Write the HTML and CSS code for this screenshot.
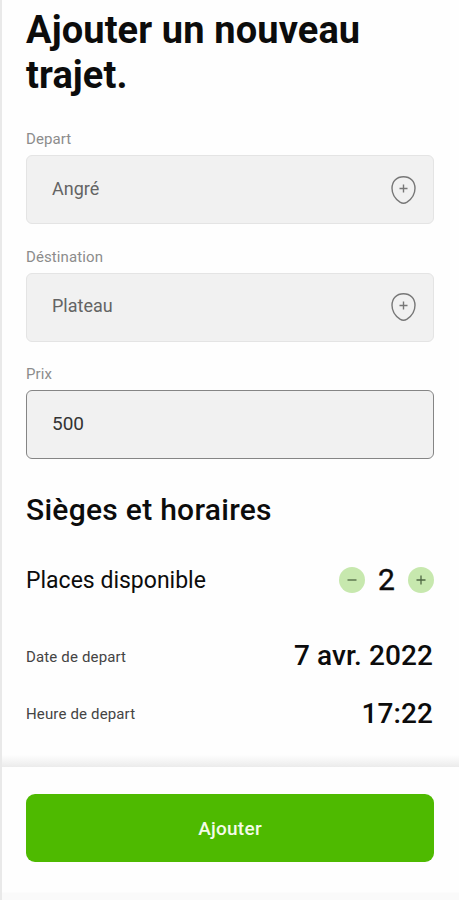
FILE: index.html
```html
<!DOCTYPE html>
<html lang="fr">
<head>
<meta charset="utf-8">
<title>Ajouter un nouveau trajet</title>
<link rel="stylesheet" href="styles.css">
</head>
<body>
<main class="content">
  <h1 class="title">Ajouter un nouveau<br>trajet.</h1>
  <div class="group">
    <div class="label">Depart</div>
    <div class="field"><span>Angré</span>
      <svg class="pin" viewBox="0 0 27 30"><path d="M13.500 1.700C6.500 1.700 2 6.500 2 13.300C2 19.500 6 24.500 10 27.200Q13.500 29.400 17 27.200C21 24.500 25 19.500 25 13.300C25 6.500 20.500 1.700 13.500 1.700Z"/><path d="M13.500 9.500v8M9.500 13.500h8"/></svg>
    </div>
  </div>
  <div class="group">
    <div class="label">Déstination</div>
    <div class="field"><span>Plateau</span>
      <svg class="pin" viewBox="0 0 27 30"><path d="M13.500 1.700C6.500 1.700 2 6.500 2 13.300C2 19.500 6 24.500 10 27.200Q13.500 29.400 17 27.200C21 24.500 25 19.500 25 13.300C25 6.500 20.500 1.700 13.500 1.700Z"/><path d="M13.500 9.500v8M9.500 13.500h8"/></svg>
    </div>
  </div>
  <div class="group">
    <div class="label">Prix</div>
    <div class="field active"><span>500</span></div>
  </div>
  <h2 class="subtitle">Sièges et horaires</h2>
  <div class="seats">
    <span class="seats-label">Places disponible</span>
    <div class="stepper">
      <svg class="step" viewBox="0 0 26 26"><circle cx="13" cy="13" r="13"/><path d="M8.500 13h9"/></svg>
      <span class="count">2</span>
      <svg class="step" viewBox="0 0 26 26"><circle cx="13" cy="13" r="13"/><path d="M8.500 13h9M13 8.500v9"/></svg>
    </div>
  </div>
  <div class="row"><span>Date de depart</span><strong>7 avr. 2022</strong></div>
  <div class="row"><span>Heure de depart</span><strong>17:22</strong></div>
</main>
<footer class="footer"><button class="submit">Ajouter</button></footer>
</body>
</html>
```
FILE: styles.css
```css
* { box-sizing: border-box; }
body {
  margin: 0;
  height: 900px;
  display: flex;
  flex-direction: column;
  overflow: hidden;
  background: #fefefe;
  border-left: 2px solid #e9e9e9;
  font-family: Roboto, "Liberation Sans", sans-serif;
  color: #0c0c0c;
}
.content {
  height: 767px;
  padding: 8px 25px 0 24px;
  background: linear-gradient(to top, #ebebeb, #fefefe 12px);
}
.title { margin: 0; height: 120px; font-size: 38px; line-height: 45px; font-weight: 700; letter-spacing: 0.120px; white-space: nowrap; }
.group { height: 117.600px; }
.label { height: 27px; font-size: 15px; line-height: 22px; letter-spacing: 0.100px; color: #8c8c8c; }
.field {
  height: 69px;
  padding: 0 16px 3px 25px;
  display: flex;
  align-items: center;
  justify-content: space-between;
  border: 1px solid #e4e4e4;
  border-radius: 6px;
  background: #f1f1f1;
  font-size: 18px;
  color: #646464;
}
.field.active { border-color: #858585; font-size: 19px; color: #333; }
.pin { width: 27px; height: 30px; margin-top: 3px; fill: none; stroke: #777; stroke-width: 1.400; }
.subtitle { margin: 0; height: 69px; padding-top: 11px; font-size: 30px; line-height: 36px; font-weight: 500; letter-spacing: 0.280px; }
.seats { height: 60px; display: flex; align-items: center; justify-content: space-between; }
.seats-label { padding-top: 2px; font-size: 23px; }
.stepper { display: flex; align-items: center; gap: 13px; }
.step { width: 26px; height: 26px; fill: #c7e8ae; stroke: none; }
.step path { stroke: #4e6642; stroke-width: 1.300; }
.count { width: 17px; font-size: 30px; line-height: 36px; font-weight: 400; -webkit-text-stroke: 0.400px; }
.row { height: 57.500px; display: flex; align-items: center; justify-content: space-between; font-size: 15px; letter-spacing: 0.150px; color: #444; }
.row span { padding-top: 2px; }
.seats + .row { margin-top: 17px; }
.row strong { margin-right: 1px; font-size: 28px; font-weight: 500; letter-spacing: 0.100px; color: #0c0c0c; }
.footer { height: 133px; padding: 27px 25px 0 24px; background: linear-gradient(to top, #fafafa 7px, #fefefe 8px); }
.submit { display: block; width: 100%; height: 68px; padding: 0; border: 0; border-radius: 9px; background: #4eba00; color: #f4fbe9; font: 500 19px Roboto, "Liberation Sans", sans-serif; letter-spacing: 0.250px; }
```
